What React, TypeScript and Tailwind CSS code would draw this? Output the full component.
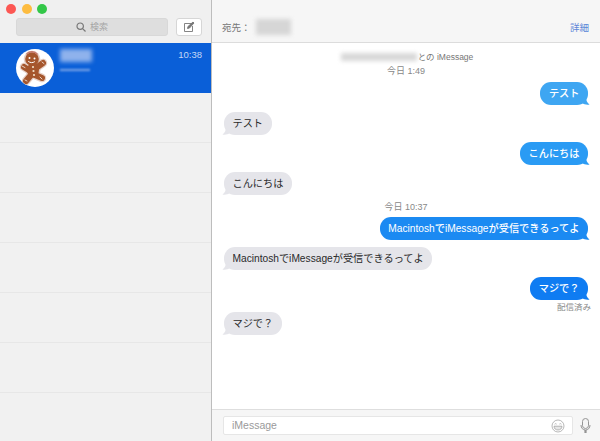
import React from 'react';

const FONT = '"Liberation Sans", "Noto Sans CJK JP", sans-serif';

const Gingerbread: React.FC = () => (
    <svg width="38" height="38" viewBox="0 0 38 38" fill="none" strokeLinecap="round">
        <g stroke="#e6d0c6" strokeWidth="8.500">
            <path d="M16 23L8 18M17 21L27 14M15 26L10 32M19 26L26 29" />
        </g>
        <circle cx="16" cy="10" r="8.300" fill="#e6d0c6" />
        <ellipse cx="17" cy="21" rx="7.500" ry="8.500" fill="#e6d0c6" />
        <g stroke="#a5562c" strokeWidth="6">
            <path d="M16 23L8 18M17 21L27 14M15 26L10 32M19 26L26 29" />
        </g>
        <circle cx="16" cy="10" r="6.800" fill="#a5562c" />
        <ellipse cx="17" cy="21" rx="6" ry="7.500" fill="#a5562c" />
        <path d="M11 4.500c3-2.600 7.500-2.400 10 .5" stroke="#c77a6c" strokeWidth="1.500" />
        <circle cx="13.500" cy="9" r="1" fill="#fff" />
        <circle cx="18.500" cy="9.500" r="1" fill="#fff" />
        <path d="M12.500 12.500c1.800 1.500 4.200 1.500 6 .3" stroke="#fff" strokeWidth="1" />
        <circle cx="17" cy="18" r="1.100" fill="#f2e0c8" />
        <circle cx="17.500" cy="22" r="1.100" fill="#f2e0c8" />
        <circle cx="18" cy="26" r="1.100" fill="#f2e0c8" />
        <path d="M6 17l3 1.600M26 13l2 1.600M9 31l2 1M24 28l2 2" stroke="#e9d2c4" strokeWidth="1" />
    </svg>
);

const SmileIcon: React.FC = () => (
    <svg width="14" height="14" viewBox="0 0 14 14" fill="none" stroke="#9a9a9a" strokeWidth="0.700">
        <circle cx="7" cy="7" r="6" />
        <path d="M3.600 5.200c.5-.7 1.400-.7 2 0M8.400 5.200c.5-.7 1.400-.7 2 0" />
        <path d="M3 7.200h8c0 2.400-1.700 3.800-4 3.800S3 9.600 3 7.200z" fill="#e6e6e6" />
    </svg>
);

const MicIcon: React.FC = () => (
    <svg width="11" height="15" viewBox="0 0 11 15" fill="none" stroke="#949494" strokeWidth="1">
        <rect x="2.500" y="0.500" width="6" height="10" rx="3" fill="#f4f4f4" />
        <path d="M1 7c0 3 1.800 5 4.500 5S10 10 10 7" />
        <path d="M5.500 12v3" strokeWidth="2.200" />
    </svg>
);

const Tail: React.FC<{ side: 'left' | 'right'; color: string }> = ({ side, color }) => (
    <svg
        width="8"
        height="8"
        viewBox="0 0 8 8"
        className={side === 'right' ? 'absolute -right-[2px] bottom-0' : 'absolute -left-[2px] bottom-0'}
    >
        {side === 'right' ? (
            <path d="M0 0h4c0 3 1 5.500 3.500 7.500C5 8 2 7.500 0 6z" fill={color} />
        ) : (
            <path d="M8 0H4C4 3 3 5.500.5 7.500 3 8 6 7.500 8 6z" fill={color} />
        )}
    </svg>
);

const Sent: React.FC<{ text: string; color: string; className?: string }> = ({ text, color, className }) => (
    <div className={`flex justify-end pr-3 ${className ?? ''}`}>
        <div
            className="relative h-[23px] px-[8.500px] rounded-[11px] text-white text-[10.200px] leading-[23px] font-medium whitespace-nowrap"
            style={{ backgroundColor: color }}
        >
            {text}
            <Tail side="right" color={color} />
        </div>
    </div>
);

const Received: React.FC<{ text: string; className?: string }> = ({ text, className }) => (
    <div className={`flex justify-start pl-3 ${className ?? ''}`}>
        <div className="relative h-[23px] px-[8.500px] rounded-[11px] bg-[#e5e5ea] text-[#2a2a2a] text-[10.200px] leading-[23px] whitespace-nowrap">
            {text}
            <Tail side="left" color="#e5e5ea" />
        </div>
    </div>
);

const App: React.FC = () => {
    return (
        <div className="w-[600px] h-[441px] flex overflow-hidden bg-white" style={{ fontFamily: FONT }}>
            {/* sidebar */}
            <div className="w-[212px] shrink-0 flex flex-col bg-[#f1f1f1] border-r border-[#bdbdbd]">
                <div className="h-[43px] shrink-0 bg-[#f0f0f0] pt-[3px]">
                    <div className="flex gap-[5.500px] pl-[6px] h-[12px] items-center">
                        <div className="w-[10px] h-[10px] rounded-full bg-[#fc5753]" />
                        <div className="w-[10px] h-[10px] rounded-full bg-[#fdbc40]" />
                        <div className="w-[10px] h-[10px] rounded-full bg-[#33c748]" />
                    </div>
                    <div className="flex items-center pl-4 pr-[9px] mt-[3px]">
                        <div className="w-[152px] h-[18px] rounded-[3px] bg-[#dedede] border border-[#d8d8d8] flex items-center justify-center gap-1">
                            <svg width="10" height="10" viewBox="0 0 10 10" fill="none" stroke="#777" strokeWidth="1.200">
                                <circle cx="4.200" cy="4.200" r="3.200" />
                                <path d="M6.600 6.600l2.900 2.900" />
                            </svg>
                            <span className="text-[9px] leading-none text-[#a5a5a5]">検索</span>
                        </div>
                        <div className="ml-auto w-[26px] h-[18px] rounded-[3px] bg-white border border-[#d6d6d6] flex items-center justify-center">
                            <svg width="12" height="12" viewBox="0 0 12 12" fill="none" stroke="#777" strokeWidth="0.900">
                                <path d="M9 2.500H1.500v8h8V5" />
                                <path d="M4.500 7.500l.5-2L10 1l1 1-4.500 5z" fill="#777" />
                            </svg>
                        </div>
                    </div>
                </div>
                <div className="h-[50px] shrink-0 bg-[#0a5fd8] flex pl-4 pr-[9px]">
                    <div className="w-[38px] h-[38px] mt-[6px] rounded-full bg-white overflow-hidden shrink-0">
                        <Gingerbread />
                    </div>
                    <div className="ml-[6px] mt-[6px] w-[42px]">
                        <div className="h-[13px] w-[32px] bg-[#8fb2ec] blur-[2px]" />
                        <div className="h-[1.500px] w-[30px] mt-[7px] bg-[#7ea6e8] blur-[1px]" />
                    </div>
                    <span className="ml-auto mt-[5px] text-[9.500px] leading-[14px] text-[#c4d8f6]">10:38</span>
                </div>
                {[0, 1, 2, 3, 4, 5].map((i) => (
                    <div key={i} className="h-[50px] shrink-0 border-b border-[#e7e7e7]" />
                ))}
            </div>

            {/* conversation */}
            <div className="flex-1 flex flex-col min-w-0">
                <div className="h-[43px] shrink-0 bg-[#f6f6f6] border-b border-[#dcdcdc] flex items-end pb-[7px] pl-[10px] pr-[11px]">
                    <span className="text-[9.500px] leading-[14px] text-[#777]">宛先：</span>
                    <div className="ml-[5px] w-[35px] h-[16px] bg-[#d6d6d6] blur-[2px]" />
                    <span className="ml-auto text-[9.500px] leading-[14px] text-[#5c86d8]">詳細</span>
                </div>

                <div className="flex-1 min-h-0 flex flex-col">
                    <div className="h-[14px] mt-[7px] flex items-center justify-center text-[8.500px] text-[#777] pl-[2px]">
                        <div className="w-[76px] h-[8px] bg-[#d8d8d8] blur-[2px]" />
                        <span className="ml-px">との iMessage</span>
                    </div>
                    <div className="h-[13px] mt-px text-center text-[9px] leading-[13px] text-[#888]">今日 1:49</div>
                    <Sent text="テスト" color="#3ea6f2" className="mt-[4px]" />
                    <Received text="テスト" className="mt-[7px]" />
                    <Sent text="こんにちは" color="#2a9bf4" className="mt-[7px]" />
                    <Received text="こんにちは" className="mt-[7px]" />
                    <div className="h-[13px] mt-[6px] text-center text-[9px] leading-[13px] text-[#888]">今日 10:37</div>
                    <Sent text="MacintoshでiMessageが受信できるってよ" color="#1b8af2" className="mt-[3px]" />
                    <Received text="MacintoshでiMessageが受信できるってよ" className="mt-[7px]" />
                    <Sent text="マジで？" color="#0f7cf2" className="mt-[7px]" />
                    <div className="h-[11px] mt-px pr-[9px] text-right text-[8.500px] leading-[12px] text-[#8a8a8a]">配信済み</div>
                    <Received text="マジで？" />
                </div>

                <div className="h-[32px] shrink-0 bg-[#f6f6f6] border-t border-[#dedede] flex items-center pl-[11px] pr-[8px]">
                    <div className="w-[350px] h-[19px] bg-white border border-[#e6e6e6] rounded-[2px] flex items-center pl-[8px] pr-[7px]">
                        <span className="text-[10.500px] leading-none text-[#9a9a9a]">iMessage</span>
                        <div className="ml-auto flex">
                            <SmileIcon />
                        </div>
                    </div>
                    <div className="ml-auto flex mr-[1px]">
                        <MicIcon />
                    </div>
                </div>
            </div>
        </div>
    );
};

export default App;
